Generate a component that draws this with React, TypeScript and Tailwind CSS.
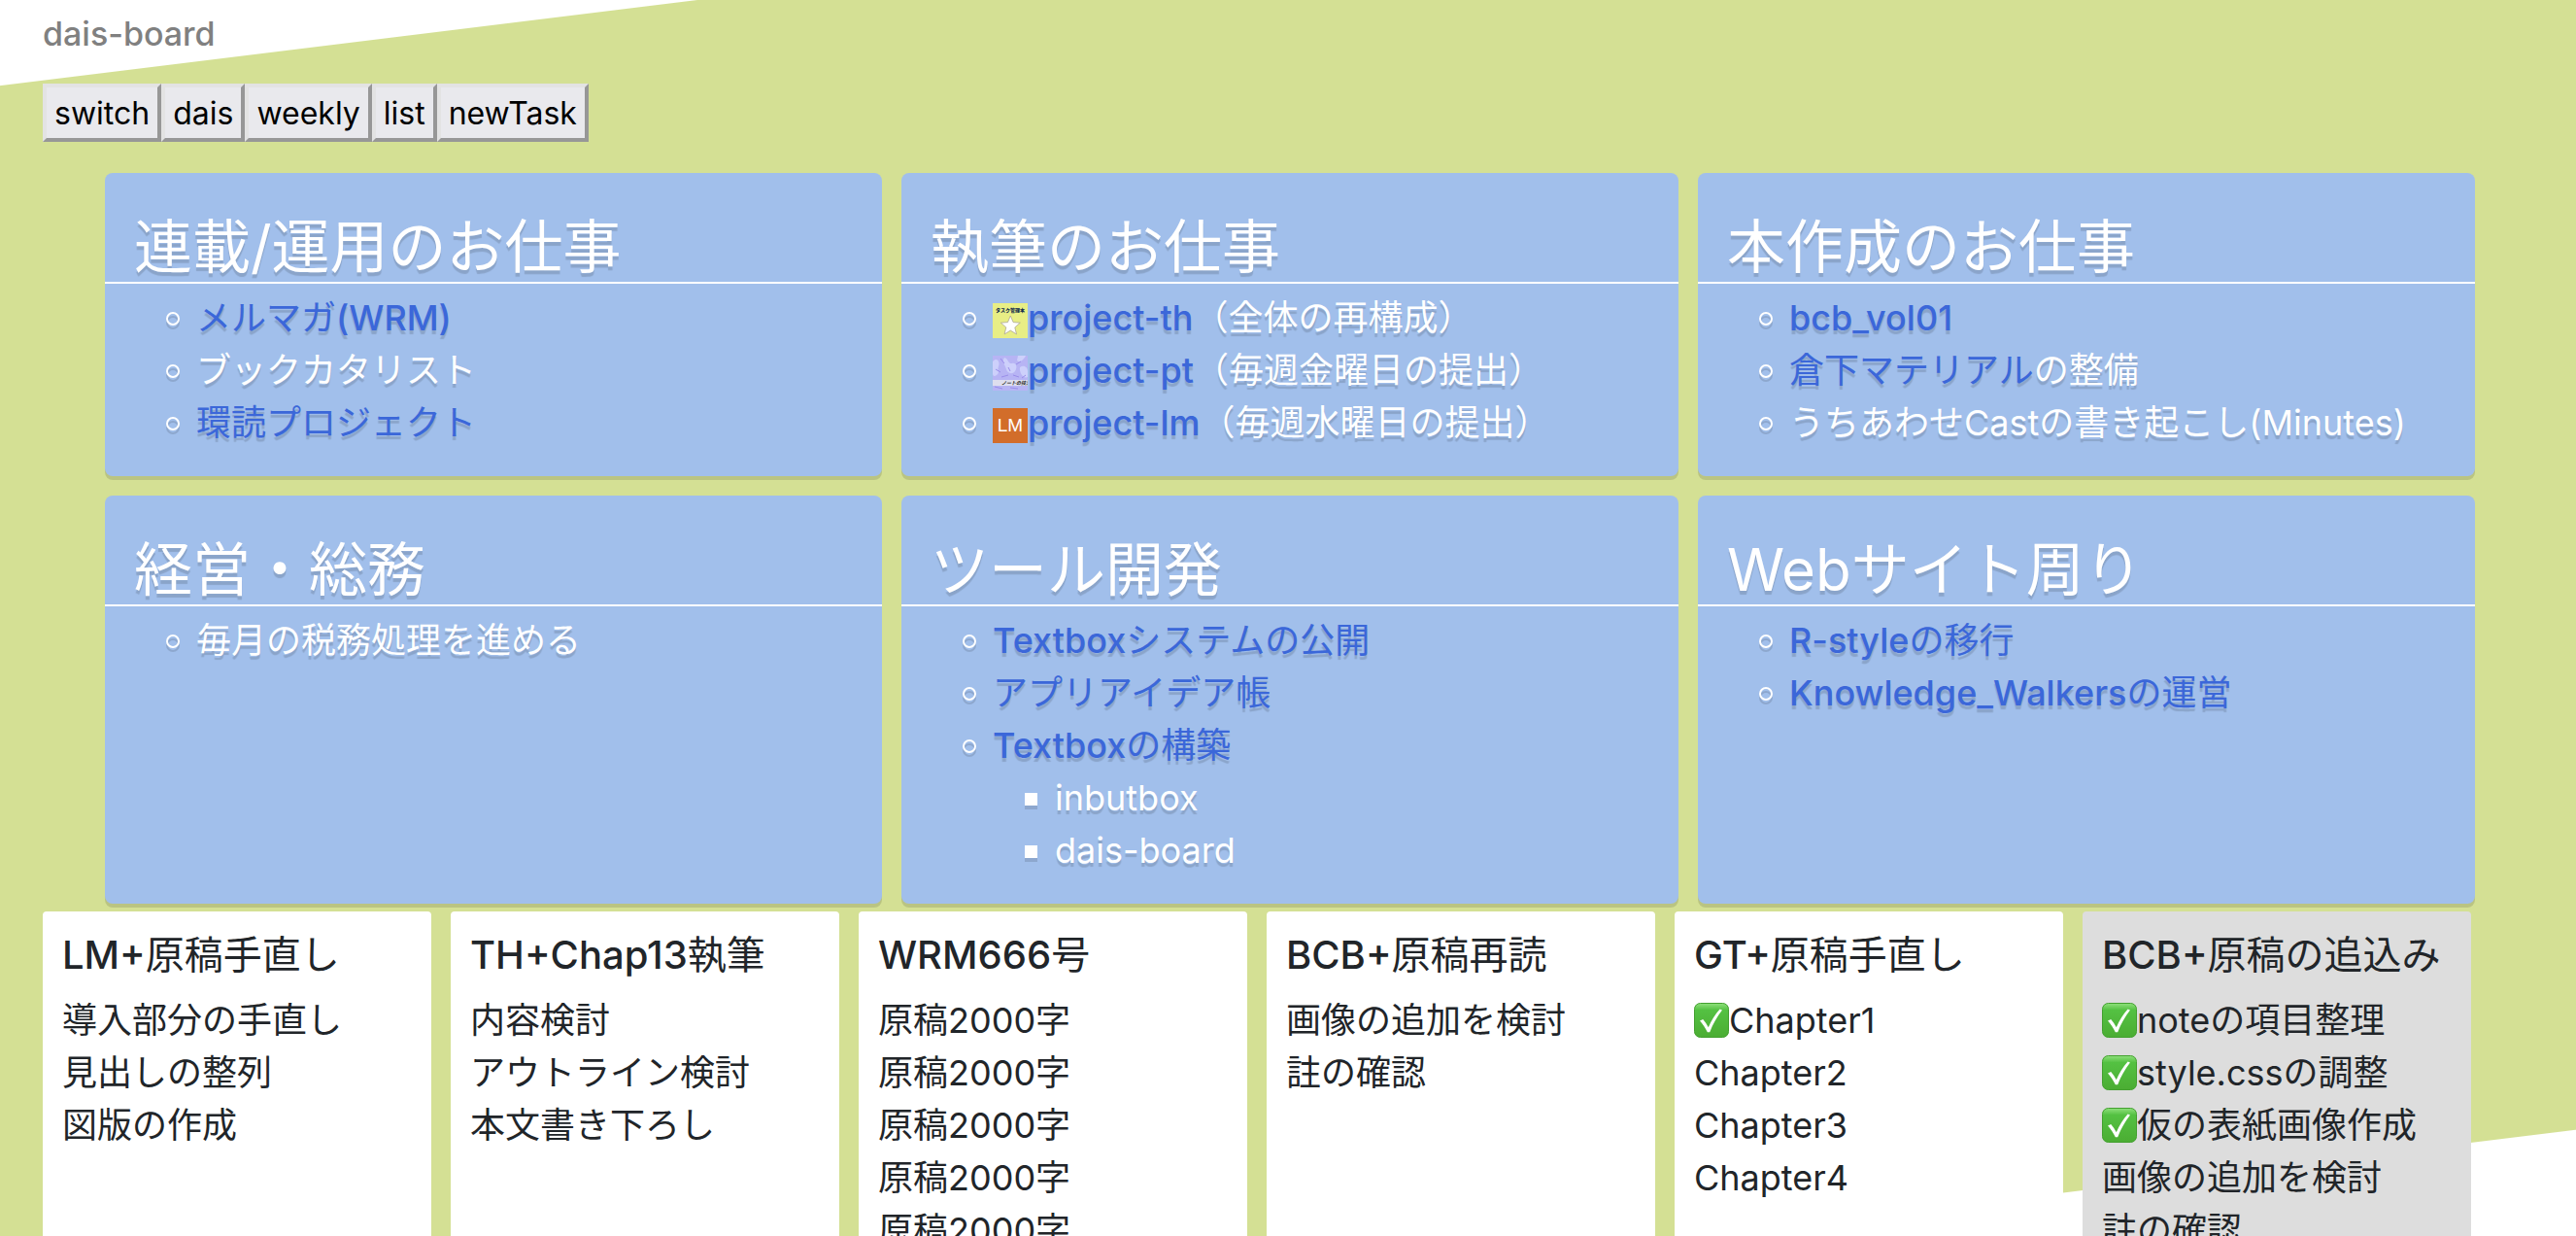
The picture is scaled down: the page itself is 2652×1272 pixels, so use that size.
import React from 'react';
import type { ReactNode } from 'react';

interface Item {
  label?: string;
  icon?: ReactNode;
  rest?: string;
  children?: string[];
}

interface Project {
  title: string;
  items: Item[];
}

interface Task {
  text: string;
  done?: boolean;
}

interface TaskCardData {
  title: string;
  tasks: Task[];
  muted?: boolean;
}

const TaskBookIcon = () => (
  <svg viewBox="0 0 36 36" className="inline-block size-9 align-[-8px] [text-shadow:none]" aria-hidden="true">
    <rect width="36" height="36" fill="#e8ee85" />
    <text x="18" y="9" textAnchor="middle" fontSize="5" fontWeight="900" fill="#16304d" fontFamily="'Noto Sans CJK JP', sans-serif">
      タスク管理本
    </text>
    <path
      d="M18.300 13l2.800 6.600 7.200.6-5.500 4.700 1.700 7-6.200-3.800-6.200 3.800 1.700-7-5.500-4.700 7.200-.6z"
      fill="#fff"
      stroke="#a39c8c"
      strokeWidth="0.7"
    />
  </svg>
);

const NoteBookIcon = () => (
  <svg viewBox="0 0 36 36" className="inline-block size-9 align-[-8px] [text-shadow:none]" aria-hidden="true">
    <rect width="36" height="36" fill="#b7b4f4" />
    <path
      d="M0 6c4-5 8 0 6 5s2 6-2 9-4-2-4-2zM12 2c4 1 4 7 8 6s6 4 3 8-8 2-9-2-5-8-2-12zM26 0h8c-2 4-6 8-9 5zM28 12c4-3 8 0 8 4v6c-4 2-9-4-8-10z"
      fill="#cdd0fb"
    />
    <path
      d="M3 14l5 3M8 3l4 5M9 22l7-2M21 20l6 2M24 9l5-3M30 23l4-3M16 12l2 4M2 32l8 2M18 33l8 1"
      stroke="#9a8eea"
      strokeWidth="1"
      fill="none"
    />
    <rect y="25" width="36" height="6" fill="#dedeee" />
    <text x="9" y="30" fontSize="5" fontWeight="700" fontStyle="italic" fill="#222" fontFamily="'Noto Sans CJK JP', sans-serif">
      ノートの技法
    </text>
  </svg>
);

const LmIcon = () => (
  <svg viewBox="0 0 36 36" className="inline-block size-9 align-[-8px] [text-shadow:none]" aria-hidden="true">
    <rect width="36" height="36" fill="#d26d2a" />
    <text x="18" y="24" textAnchor="middle" fontSize="19" fontWeight="400" fill="#fff" fontFamily="'Liberation Sans', sans-serif">
      LM
    </text>
  </svg>
);

const CheckIcon = () => (
  <svg viewBox="0 0 36 36" className="inline-block size-9 align-[-5px]" role="img" aria-label="done">
    <defs>
      <linearGradient id="check-fill" x1="0" y1="0" x2="0" y2="1">
        <stop offset="0" stopColor="#8fe07c" />
        <stop offset="0.2" stopColor="#54c142" />
        <stop offset="1" stopColor="#4bad33" />
      </linearGradient>
    </defs>
    <rect x="0.5" y="0.5" width="35" height="35" rx="6" fill="url(#check-fill)" stroke="#43a02f" />
    <path
      d="M6 18.500l3.200-1.500c2.200 2.600 3.800 5 5.600 8.200C18 18 21.600 12 26.600 6.600l2.400 1C23.500 14.500 19.800 21.500 16.200 30.200h-2.400C11.500 25.500 9.200 22.200 6 18.500z"
      fill="#fff"
    />
  </svg>
);

// Latin runs carry the heavier weight, Japanese stays regular
const MixedText: React.FC<{ text: string }> = ({ text }) => (
  <>
    {text.split(/([\x20-\x7e]+)/).map((part, i) =>
      i % 2 ? (
        <span key={i} className="font-medium">
          {part}
        </span>
      ) : (
        part
      ),
    )}
  </>
);

const menu = ['switch', 'dais', 'weekly', 'list', 'newTask'];

const projects: Project[] = [
  {
    title: '連載/運用のお仕事',
    items: [{ label: 'メルマガ(WRM)' }, { rest: 'ブックカタリスト' }, { label: '環読プロジェクト' }],
  },
  {
    title: '執筆のお仕事',
    items: [
      { icon: <TaskBookIcon />, label: 'project-th', rest: '（全体の再構成）' },
      { icon: <NoteBookIcon />, label: 'project-pt', rest: '（毎週金曜日の提出）' },
      { icon: <LmIcon />, label: 'project-lm', rest: '（毎週水曜日の提出）' },
    ],
  },
  {
    title: '本作成のお仕事',
    items: [
      { label: 'bcb_vol01' },
      { label: '倉下マテリアル', rest: 'の整備' },
      { rest: 'うちあわせCastの書き起こし(Minutes)' },
    ],
  },
  {
    title: '経営・総務',
    items: [{ rest: '毎月の税務処理を進める' }],
  },
  {
    title: 'ツール開発',
    items: [
      { label: 'Textboxシステムの公開' },
      { label: 'アプリアイデア帳' },
      { label: 'Textboxの構築', children: ['inbutbox', 'dais-board'] },
    ],
  },
  {
    title: 'Webサイト周り',
    items: [{ label: 'R-styleの移行' }, { label: 'Knowledge_Walkersの運営' }],
  },
];

const taskCards: TaskCardData[] = [
  {
    title: 'LM+原稿手直し',
    tasks: [{ text: '導入部分の手直し' }, { text: '見出しの整列' }, { text: '図版の作成' }],
  },
  {
    title: 'TH+Chap13執筆',
    tasks: [{ text: '内容検討' }, { text: 'アウトライン検討' }, { text: '本文書き下ろし' }],
  },
  {
    title: 'WRM666号',
    tasks: [
      { text: '原稿2000字' },
      { text: '原稿2000字' },
      { text: '原稿2000字' },
      { text: '原稿2000字' },
      { text: '原稿2000字' },
    ],
  },
  {
    title: 'BCB+原稿再読',
    tasks: [{ text: '画像の追加を検討' }, { text: '註の確認' }],
  },
  {
    title: 'GT+原稿手直し',
    tasks: [{ text: 'Chapter1', done: true }, { text: 'Chapter2' }, { text: 'Chapter3' }, { text: 'Chapter4' }],
  },
  {
    title: 'BCB+原稿の追込み',
    muted: true,
    tasks: [
      { text: 'noteの項目整理', done: true },
      { text: 'style.cssの調整', done: true },
      { text: '仮の表紙画像作成', done: true },
      { text: '画像の追加を検討' },
      { text: '註の確認' },
    ],
  },
];

const ProjectCard: React.FC<{ project: Project }> = ({ project }) => (
  <section className="rounded-lg bg-[#a1bfeb] pt-10 pb-7 text-white shadow-[0_4px_0_rgba(0,0,0,0.12)] [text-shadow:0_4px_1px_rgba(0,0,0,0.14)]">
    <h2 className="border-b-2 border-white px-[30px] text-[60px] leading-[72px]">{project.title}</h2>
    <ul className="mt-2 pl-[63px]">
      {project.items.map((item) => (
        <li key={item.label ?? item.rest}>
          <div className="flex items-center gap-[17px]">
            <span className="mt-[2px] size-[14px] shrink-0 rounded-full border-2 border-white drop-shadow-[0_4px_0_rgba(0,0,0,0.12)]" />
            <span className="whitespace-nowrap">
              {item.icon}
              {item.label && (
                <a href="#" className="text-[#3b67d9]">
                  <MixedText text={item.label} />
                </a>
              )}
              {item.rest}
            </span>
          </div>
          {item.children && (
            <ul className="pl-16">
              {item.children.map((child) => (
                <li key={child} className="flex items-center gap-[18px]">
                  <span className="mt-[2px] size-[13px] shrink-0 bg-white shadow-[0_4px_0_rgba(0,0,0,0.12)]" />
                  {child}
                </li>
              ))}
            </ul>
          )}
        </li>
      ))}
    </ul>
  </section>
);

const TaskCard: React.FC<{ card: TaskCardData }> = ({ card }) => (
  <section className={`rounded-t px-5 pt-[21px] whitespace-nowrap ${card.muted ? 'bg-[#dddddd]' : 'bg-white'}`}>
    <h3 className="mb-4 text-[40px] leading-[48px]">
      <MixedText text={card.title} />
    </h3>
    <ul>
      {card.tasks.map((task, i) => (
        <li key={i}>
          {task.done && <CheckIcon />}
          {task.text}
        </li>
      ))}
    </ul>
  </section>
);

export default function App() {
  return (
    <div
      lang="ja"
      className="flex h-screen flex-col overflow-hidden bg-[linear-gradient(173deg,#fff_87px,#d4e094_88px,#d4e094_calc(100%-109px),#fff_calc(100%-108px))] pt-2 pl-11 font-[Inter,'Noto_Sans_CJK_JP',sans-serif] text-[36px] leading-[54px] text-[#212529]"
    >
      <h1 className="text-[34px] font-medium text-[#808080]">dais-board</h1>
      <nav className="mt-6 flex text-[32px] leading-[48px] text-black">
        {menu.map((name) => (
          <button
            key={name}
            className="border-4 border-t-[#e3e3e3] border-r-[#979797] border-b-[#979797] border-l-[#e3e3e3] bg-[#e9e9ed] px-2 pt-[3px] pb-px"
          >
            {name}
          </button>
        ))}
      </nav>
      <main className="mt-8 flex min-h-0 flex-1 flex-col gap-2">
        <div className="grid grid-cols-3 gap-5 pr-[104px] pl-16">
          {projects.map((project) => (
            <ProjectCard key={project.title} project={project} />
          ))}
        </div>
        <div className="grid min-h-0 flex-1 grid-cols-6 gap-5 pr-[108px]">
          {taskCards.map((card) => (
            <TaskCard key={card.title} card={card} />
          ))}
        </div>
      </main>
    </div>
  );
}
